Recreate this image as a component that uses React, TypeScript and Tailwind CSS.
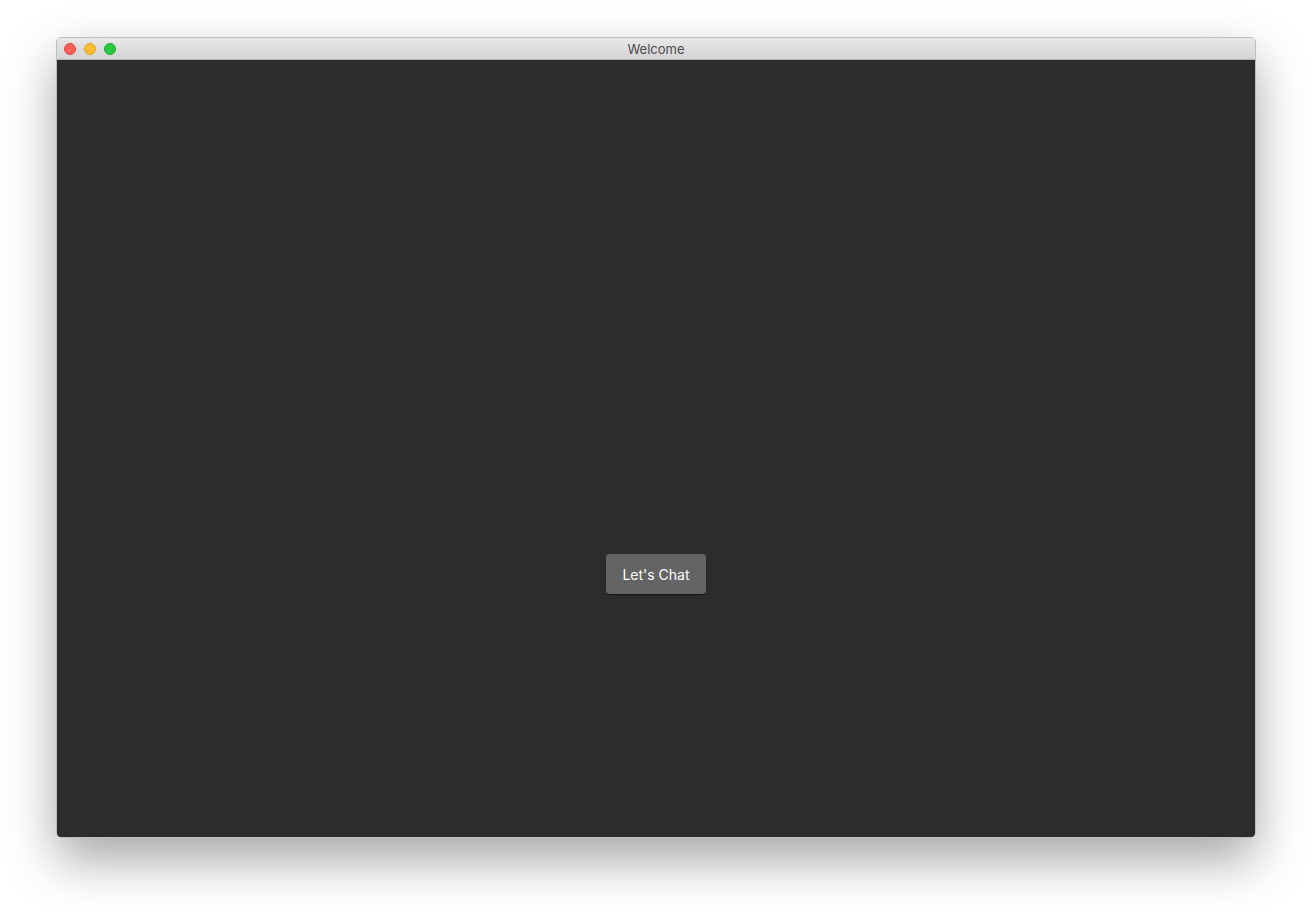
export default function App() {
  return (
    <div className="min-h-[912px] w-[1312px] bg-white pt-[37px] pl-[56px] font-['Inter','Liberation_Sans',sans-serif]">
      <div className="w-[1200px] h-[801px] rounded-[5px] overflow-hidden border border-[#bdbdbd] shadow-[0_22px_50px_rgba(0,0,0,0.35)] flex flex-col">
        {/* Title bar */}
        <div className="relative h-[22px] shrink-0 bg-gradient-to-b from-[#e8e8e8] to-[#d3d3d3] border-b border-[#b4b4b4] flex items-center justify-center">
          <div className="absolute left-[7px] top-[5px] flex gap-[8px]">
            <span className="w-[12px] h-[12px] rounded-full bg-[#fe5f57] border border-[#e0443e]" />
            <span className="w-[12px] h-[12px] rounded-full bg-[#febc2e] border border-[#dea123]" />
            <span className="w-[12px] h-[12px] rounded-full bg-[#28c840] border border-[#1aab29]" />
          </div>
          <span className="pt-[2px] text-[13px] text-[#4d4d4d] leading-none">Welcome</span>
        </div>
        {/* Content */}
        <div className="flex-1 bg-[#2c2c2e] flex justify-center pt-[494px]">
          <button className="w-[100px] h-[40px] pt-[1px] rounded-[4px] bg-[#646464] text-[14px] text-white shadow-[0_1px_1px_rgba(0,0,0,0.5)]">
            Let's Chat
          </button>
        </div>
      </div>
    </div>
  );
}
